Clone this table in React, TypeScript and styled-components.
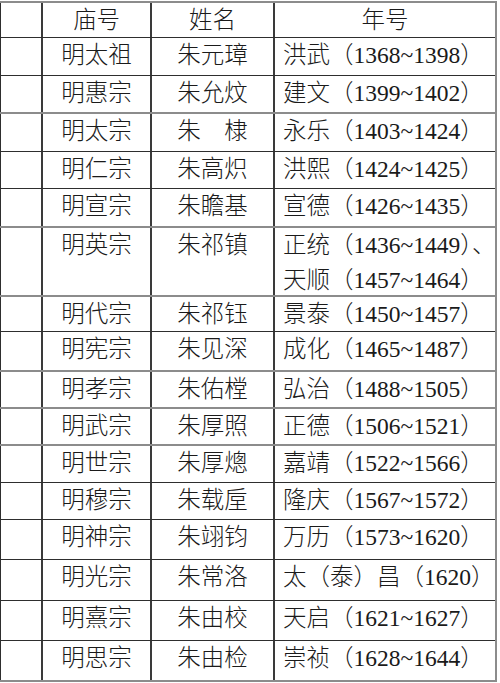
import React from 'react';
import styled, { createGlobalStyle } from 'styled-components';

const GlobalStyle = createGlobalStyle`
    html, body {
        margin: 0;
        padding: 0;
        background: #fff;
    }
`

type Emperor = {
    temple: string;
    name: string;
    eras: string[];
    h: number;
    soft?: boolean;
}

const emperors: Emperor[] = [
    { temple: '明太祖', name: '朱元璋', eras: ['洪武（1368~1398）'], h: 38 },
    { temple: '明惠宗', name: '朱允炆', eras: ['建文（1399~1402）'], h: 37 },
    { temple: '明太宗', name: '朱　棣', eras: ['永乐（1403~1424）'], h: 39, soft: true },
    { temple: '明仁宗', name: '朱高炽', eras: ['洪熙（1424~1425）'], h: 37 },
    { temple: '明宣宗', name: '朱瞻基', eras: ['宣德（1426~1435）'], h: 38 },
    { temple: '明英宗', name: '朱祁镇', eras: ['正统（1436~1449）、', '天顺（1457~1464）'], h: 69, soft: true },
    { temple: '明代宗', name: '朱祁钰', eras: ['景泰（1450~1457）'], h: 36, soft: true },
    { temple: '明宪宗', name: '朱见深', eras: ['成化（1465~1487）'], h: 39 },
    { temple: '明孝宗', name: '朱佑樘', eras: ['弘治（1488~1505）'], h: 37, soft: true },
    { temple: '明武宗', name: '朱厚照', eras: ['正德（1506~1521）'], h: 37, soft: true },
    { temple: '明世宗', name: '朱厚熜', eras: ['嘉靖（1522~1566）'], h: 38, soft: true },
    { temple: '明穆宗', name: '朱载垕', eras: ['隆庆（1567~1572）'], h: 37 },
    { temple: '明神宗', name: '朱翊钧', eras: ['万历（1573~1620）'], h: 40 },
    { temple: '明光宗', name: '朱常洛', eras: ['太（泰）昌（1620）'], h: 41 },
    { temple: '明熹宗', name: '朱由校', eras: ['天启（1621~1627）'], h: 40 },
    { temple: '明思宗', name: '朱由检', eras: ['崇祯（1628~1644）'], h: 40 },
]

const Sheet = styled.div`
    width: 497px;
    margin-top: 1px;
    border-bottom: 2px solid #8c8c8c;
    border-right: 2px solid #8c8c8c;
    box-sizing: border-box;
    font-family: "Liberation Serif", "Noto Sans CJK SC", serif;
    font-size: 23.5px;
    font-weight: 300;
    color: #1a1a1a;
`

const Row = styled.div<{ $h: number; $soft?: boolean }>`
    display: grid;
    grid-template-columns: 41px 109px 123px 1fr;
    height: ${p => p.$h}px;
    box-sizing: border-box;
    border-top: ${p => (p.$soft ? '2px solid #8c8c8c' : '1px solid #2e2e2e')};
`

const Cell = styled.div<{ $left?: boolean }>`
    border-left: 2px solid #3a3a3a;
    box-sizing: border-box;
    line-height: 35px;
    white-space: nowrap;
    overflow: hidden;
    text-align: ${p => (p.$left ? 'left' : 'center')};
    padding-left: ${p => (p.$left ? '8px' : '0')};
`

const Blank = styled(Cell)`
    border-left: 1px solid #2e2e2e;
`

export default function App() {
    return (
        <>
            <GlobalStyle />
            <Sheet>
                <Row $h={36} $soft>
                    <Blank />
                    <Cell>庙号</Cell>
                    <Cell>姓名</Cell>
                    <Cell>年号</Cell>
                </Row>
                {emperors.map(e => (
                    <Row key={e.temple} $h={e.h} $soft={e.soft}>
                        <Blank />
                        <Cell>{e.temple}</Cell>
                        <Cell>{e.name}</Cell>
                        <Cell $left>
                            {e.eras.map(line => (
                                <div key={line}>{line}</div>
                            ))}
                        </Cell>
                    </Row>
                ))}
            </Sheet>
        </>
    );
}
